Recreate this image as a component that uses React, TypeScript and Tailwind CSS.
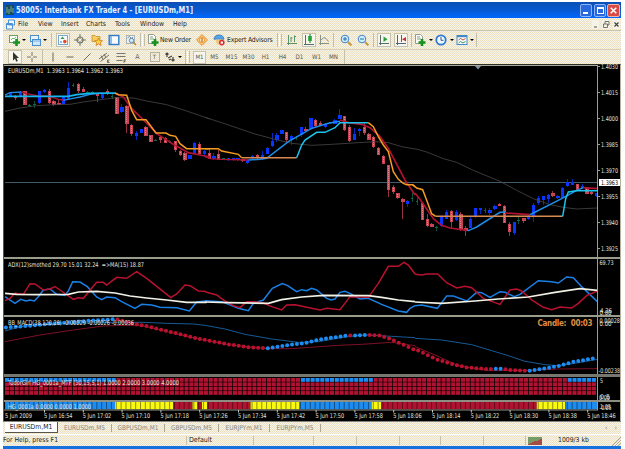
import React from 'react';

type Candle = [x: number, high: number, top: number, bottom: number, low: number, kind: string];

const colors: Record<string, string> = { b: '#0a35ff', r: '#c84455', t: '#0b6b4c' };
const BAR = 4.85;
const dither =
  'bg-[#ede5c8] bg-[conic-gradient(#f5f5ee_25%,#ebdfbd_0_50%,#f3f3ea_0_75%,#ece3c8_0)] bg-[length:2px_2px]';

// Candles are kept in thirds of a pixel, one block for each stretch of the session
const blocks: { origin: string; candles: Candle[]; lines: [string, string, number][] }[] = [
  {
    origin: 'translate(0 62) scale(.33333)',
    candles: [
      [31, 92, 94, 101, 103, 'b'], [46, 98, 101, 108, 114, 'r'], [61, 87, 94, 101, 103, 'b'], [75, 86, 88, 129, 129, 'r'],
      [90, 126, 130, 133, 136, 't'], [105, 118, 126, 129, 137, 't'], [119, 86, 87, 123, 125, 'b'], [134, 80, 83, 91, 93, 'b'],
      [148, 82, 88, 124, 126, 'r'], [162, 115, 117, 130, 132, 'r'], [177, 112, 122, 129, 130, 'r'], [191, 104, 106, 126, 127, 'b'],
      [206, 60, 77, 111, 113, 'b'], [220, 64, 69, 72, 76, 't'], [235, 63, 65, 88, 92, 'r'], [250, 74, 82, 89, 90, 'r'],
      [264, 86, 89, 92, 94, 't'], [278, 88, 91, 94, 96, 't'], [293, 93, 97, 103, 120, 'r'], [308, 93, 95, 108, 112, 'b'],
      [322, 80, 88, 96, 98, 'r'], [337, 96, 102, 105, 110, 't'], [351, 104, 106, 155, 155, 'r'], [366, 125, 134, 150, 154, 'b'],
      [381, 129, 131, 185, 212, 'r'], [395, 185, 189, 216, 222, 'r'], [410, 208, 214, 222, 233, 'b'], [424, 200, 202, 212, 214, 'b'],
      [438, 193, 195, 222, 222, 'r'], [453, 218, 220, 240, 240, 'r'], [468, 230, 233, 236, 238, 't'], [482, 222, 226, 233, 242, 'r'],
      [496, 225, 227, 243, 243, 'r'], [510, 234, 237, 240, 242, 't'], [526, 236, 238, 264, 270, 'r'], [541, 264, 266, 280, 282, 'r'],
      [555, 271, 273, 294, 296, 'r'], [570, 278, 280, 290, 291, 'b'], [584, 240, 242, 275, 275, 'b'], [599, 240, 246, 275, 280, 'r'],
      [614, 265, 267, 277, 285, 'b'], [628, 265, 272, 290, 291, 'r'],
    ],
    lines: [
      ['#454545', '15,148 60,138 110,131 165,128 210,127 250,120 310,112 350,107 400,108 440,117 500,128 560,147 630,171', 2.5],
      ['#1e8ee8', '15,99 30,92 65,90', 4],
      ['#b01232', '65,90 80,95 110,101 150,103 175,112 190,114', 4],
      ['#1e8ee8', '190,115 215,110 240,105 270,97 295,94 345,94', 4],
      ['#14b8f0', '15,103 205,103 230,98 270,94 345,93', 5],
      ['#b01232', '345,93 370,105 395,140 435,178 470,215 520,247 565,272 630,285', 5],
      ['#f59c22', '345,93 355,98 380,100 395,145 410,173 438,173 468,213 498,213 510,220 527,223 540,245 560,260 630,260', 4.5],
    ],
  },
  {
    origin: 'translate(205 90) scale(.33333)',
    candles: [
      [27, 190, 198, 208, 210, 'b'], [41, 180, 193, 210, 210, 'r'], [56, 203, 205, 208, 210, 't'], [70, 204, 205, 211, 212, 'b'],
      [85, 203, 205, 210, 212, 'b'], [99, 203, 205, 210, 212, 'b'], [114, 206, 208, 214, 215, 'r'], [128, 208, 209, 220, 221, 'b'],
      [143, 195, 197, 204, 206, 'b'], [158, 193, 195, 204, 206, 'r'], [173, 182, 194, 208, 209, 'b'], [187, 170, 174, 192, 193, 'b'],
      [202, 130, 153, 169, 170, 'b'], [216, 130, 136, 151, 155, 'b'], [231, 119, 120, 132, 132, 'b'], [245, 125, 127, 150, 160, 'r'],
      [260, 135, 138, 151, 165, 'b'], [274, 138, 142, 145, 150, 't'], [289, 110, 112, 136, 140, 'b'], [303, 110, 116, 122, 123, 'r'],
      [318, 83, 84, 118, 118, 'b'], [332, 87, 89, 108, 110, 'r'], [347, 94, 100, 107, 109, 'r'], [361, 99, 101, 111, 113, 'b'],
      [376, 95, 97, 100, 102, 't'], [390, 87, 89, 101, 102, 'b'], [405, 58, 75, 86, 88, 'b'], [419, 77, 79, 119, 122, 'r'],
      [434, 105, 111, 154, 155, 'r'], [448, 115, 131, 150, 150, 'b'], [463, 115, 117, 124, 138, 'b'], [478, 95, 110, 129, 134, 'r'],
      [492, 130, 132, 150, 150, 'r'], [506, 139, 141, 170, 174, 'r'], [521, 172, 174, 196, 196, 'r'], [536, 196, 197, 221, 221, 'r'],
      [550, 225, 226, 300, 320, 'r'], [565, 286, 291, 305, 312, 'r'], [579, 308, 309, 325, 327, 'r'], [594, 325, 328, 336, 386, 'r'],
      [608, 330, 334, 342, 350, 'b'], [622, 310, 324, 327, 335, 't'],
    ],
    lines: [
      ['#454545', '0,82 50,98 100,115 150,132 210,148 260,160 320,166 380,163 460,158 510,155 550,158 590,170 630,177', 2.5],
      ['#b01232', '0,200 15,206 50,208 130,210', 4],
      ['#1e8ee8', '130,210 165,208 185,205 250,155 320,115 370,100 405,94', 4.5],
      ['#b01232', '405,90 430,98 470,103 495,113 525,140 550,175 600,270 630,315', 5],
      ['#f59c22', '0,176 40,176 50,183 100,193 110,203', 4.5],
      ['#d98a50', '110,203 275,203', 4.5],
      ['#1cc4ee', '275,203 290,165 300,150 335,127 360,127 390,113 405,98 490,98', 4.5],
      ['#f59c22', '490,98 505,110 520,140 535,165 550,185 565,245 580,268 595,280 605,284 622,284 630,290', 4.5],
    ],
  },
  {
    origin: 'translate(400 62) scale(.33333)',
    candles: [
      [52, 405, 416, 419, 430, 't'], [67, 420, 422, 475, 475, 'r'], [82, 455, 470, 493, 494, 'r'], [96, 484, 486, 494, 496, 'r'],
      [111, 492, 496, 499, 508, 't'], [125, 463, 465, 492, 496, 'b'], [139, 445, 450, 470, 471, 'b'], [154, 444, 446, 480, 500, 'r'],
      [169, 445, 451, 475, 477, 'b'], [183, 450, 456, 503, 506, 'r'], [198, 493, 497, 507, 523, 'r'], [212, 464, 470, 497, 498, 'b'],
      [227, 438, 439, 466, 467, 'b'], [241, 437, 439, 445, 456, 'b'], [256, 438, 444, 447, 453, 't'], [270, 438, 445, 452, 458, 'b'],
      [285, 429, 431, 440, 445, 'b'], [299, 423, 425, 432, 433, 'r'], [314, 430, 433, 482, 483, 'r'], [328, 480, 486, 509, 523, 'r'],
      [343, 480, 481, 513, 518, 'b'], [357, 461, 474, 477, 487, 't'], [372, 468, 469, 476, 482, 'r'], [386, 455, 465, 471, 473, 'b'],
      [401, 424, 430, 466, 481, 'b'], [416, 402, 408, 424, 430, 'b'], [430, 401, 403, 415, 428, 'b'], [445, 397, 399, 410, 424, 'b'],
      [459, 387, 393, 402, 404, 'r'], [474, 398, 402, 408, 411, 'b'], [488, 376, 378, 408, 410, 'b'], [503, 352, 361, 373, 375, 'b'],
      [518, 352, 361, 368, 369, 'b'], [532, 366, 367, 385, 387, 'r'], [547, 365, 371, 378, 380, 'b'], [561, 376, 378, 395, 396, 'r'],
      [575, 387, 389, 397, 398, 'r'], [590, 392, 394, 403, 404, 'b'],
    ],
    lines: [
      ['#454545', '45,260 80,270 130,290 170,301 220,325 300,358 350,385 400,410 450,428 490,436 530,441 593,438', 2.5],
      ['#b01232', '45,393 60,412 100,470 125,490 150,498 200,505', 5],
      ['#1e8ee8', '203,506 212,503 230,495 300,451 315,450', 4.5],
      ['#b01232', '315,453 390,458', 5],
      ['#f59c22', '38,368 50,378 68,383 80,415 95,455 107,463', 4.5],
      ['#d98a50', '107,463 488,463', 4.5],
      ['#1e8ee8', '390,458 400,453 485,410 530,385 550,377', 4.5],
      ['#b01232', '550,377 593,380', 5],
      ['#1cc4ee', '488,463 497,410 505,390 530,386 593,386', 4.5],
    ],
  },
];

const adx: { origin: string; lines: [string, string][] }[] = [
  {
    origin: 'translate(0 255) scale(.33333)',
    lines: [
      ['#1a80e6', '15,125 45,145 62,133 78,138 90,135 103,138 115,125 130,105 150,102 170,118 195,121 205,108 218,80 240,81 262,95 290,126 305,134 320,126 345,128 365,140 405,160 425,148 455,150 480,157 530,158 568,168 590,141 616,138'],
      ['#b8122f', '15,137 30,130 45,115 70,118 90,86 105,87 130,105 150,102 165,95 180,105 220,133 235,128 250,130 290,82 310,82 320,90 350,67 380,70 410,50 440,70 490,110 512,128 530,117 555,90 570,92 595,108 616,109'],
      ['#f0f0e4', '15,115 50,118 110,119 205,118 235,111 290,109 345,114 390,123 440,129 500,135 560,142 620,142'],
    ],
  },
  {
    origin: 'translate(205 255) scale(.33333)',
    lines: [
      ['#1a80e6', '0,137 50,140 100,160 130,167 145,145 175,135 202,100 232,86 248,92 275,110 290,104 305,107 320,100 335,105 365,130 378,135 390,132 405,112 420,109 435,115 465,132 490,130 530,148 580,168 605,172 615,160 630,152'],
      ['#b8122f', '0,110 35,120 60,138 85,152 105,158 125,140 150,140 175,144 200,155 230,165 245,150 270,149 345,165 365,160 405,164 435,125 490,127 520,85 550,34 580,34 597,22 610,30 630,57'],
      ['#f0f0e4', '0,141 70,143 190,145 230,134 290,126 355,121 490,122 530,127 580,135 630,140'],
    ],
  },
  {
    origin: 'translate(415 255) scale(.33333)',
    lines: [
      ['#1a80e6', '0,152 20,150 67,160 95,123 115,123 155,138 185,112 200,113 225,127 255,110 270,112 298,125 315,118 370,77 410,80 430,84 455,66 475,68 500,95 547,140'],
      ['#b8122f', '0,58 20,60 35,57 68,57 95,83 125,99 150,94 170,98 205,130 255,148 285,105 305,102 320,108 350,135 385,157 410,164 435,156 470,159 490,145 515,122 547,108'],
      ['#f0f0e4', '0,141 80,145 180,138 250,132 340,126 420,112 495,101 547,106'],
    ],
  },
];

const bands: { origin: string; blue: string; red: string }[] = [
  {
    origin: 'translate(0 255) scale(.33333)',
    blue: '15,228 70,213 200,206 330,202 430,202 500,205 580,207 615,211',
    red: '15,260 120,240 220,225 310,213 375,211 430,213 500,230 615,256',
  },
  {
    origin: 'translate(205 255) scale(.33333)',
    blue: '0,211 60,222 120,238 200,252 280,262 340,260 420,246 480,240 560,244 630,248',
    red: '0,256 70,269 185,281 260,281 400,271 470,268 560,262 630,272',
  },
  {
    origin: 'translate(415 255) scale(.33333)',
    blue: '0,250 80,255 170,269 280,302 330,319 390,329 430,332 480,325 547,313',
    red: '0,275 60,300 130,332 220,347 340,346 430,342 547,341',
  },
];

const macd: [number, number][] = [
  [5, 327.5], [30, 325.7], [43, 324.3], [63, 322.7], [77, 321.7], [90, 320.7], [113, 319.3], [118, 319.7], [130, 323],
  [147, 326.3], [160, 329.7], [177, 333.3], [193, 337.7], [205, 340], [228, 344.3], [248, 347.3], [267, 348.2], [288, 345],
  [305, 343], [318, 339.7], [345, 335.7], [368, 335], [378, 335.3], [388, 338.3], [402, 344.3], [412, 349], [418, 350.7],
  [437, 359.7], [452, 364], [465, 367.3], [487, 369], [500, 368.7], [510, 370], [528, 371], [543, 368.7], [558, 366],
  [572, 362], [585, 359.7], [598, 357.7],
];

const macdBlue: [number, number][] = [[0, 115], [265, 346], [352, 366], [492, 502], [527, 600]];
const topBlue: [number, number][] = [[0, 115], [298, 370], [564, 600]];

const trend: [number, number, string][] = [
  [5, 115, '#1d8cf0'], [115, 173, '#fafa10'], [173, 192.5, '#b01232'], [192.5, 197.5, '#fafa10'], [197.5, 202, '#b01232'],
  [202, 207, '#fafa10'], [207, 250.5, '#b01232'], [250.5, 299, '#fafa10'], [299, 371.5, '#1d8cf0'], [371.5, 381, '#fafa10'],
  [381, 536.7, '#b01232'], [536.7, 565.3, '#fafa10'], [565.3, 597, '#1d8cf0'],
];

const prices = ['1.4030', '1.4015', '1.4000', '1.3985', '1.3970', '1.3955', '1.3940', '1.3925'];
const times = [
  '16:54', '17:02', '17:10', '17:18', '17:26', '17:34', '17:42', '17:50',
  '17:58', '18:06', '18:14', '18:22', '18:30', '18:38', '18:46',
];
const bars = Array.from({ length: 122 }, (_, i) => 5.4 + i * BAR);

function within(x: number, ranges: [number, number][]) {
  return ranges.some(([from, to]) => x >= from && x < to);
}

function macdAt(x: number) {
  const i = Math.max(1, macd.findIndex(p => p[0] >= x));
  const [x0, y0] = macd[i - 1];
  const [x1, y1] = macd[i];
  return y0 + ((y1 - y0) * (x - x0)) / (x1 - x0);
}

function Label({ x, y, w, size = 6.5, fill = '#e4e4dc', children }: {
  x: number; y: number; w: number; size?: number; fill?: string; children: string;
}) {
  return (
    <text x={x} y={y} fontSize={size} fill={fill} textLength={w} lengthAdjust="spacingAndGlyphs" xmlSpace="preserve">
      {children}
    </text>
  );
}

function Axis({ from, to }: { from: number; to: number }) {
  return <path d={`M597.5 ${from}V${to}`} stroke="#9a9f90" />;
}

function MainChart() {
  return (
    <svg className="block h-[192px] w-full overflow-visible" viewBox="4 65 616 192">
      <path d="M4 65.5H597.5" stroke="#a8ab98" />
      <path d="M5 182.5H597" stroke="#42596a" />
      {blocks.map(block => (
        <g key={block.origin} transform={block.origin}>
          <g shapeRendering="crispEdges">
            {block.candles.map(([x, high, top, bottom, low, kind]) => (
              <g key={x} fill={colors[kind]}>
                <rect x={x - 1.5} y={high} width={3} height={low - high} opacity={0.75} />
                <rect x={x - 4.5} y={top} width={kind === 't' ? 8 : 9.5} height={bottom - top} />
                {kind === 'r' && bottom - top > 12 && (
                  <path d={`M${x} ${top + 3}V${bottom - 3}`} stroke="#e0858c" strokeWidth={3} strokeDasharray="3 3" />
                )}
              </g>
            ))}
          </g>
          {block.lines.map(([color, points, width]) => (
            <polyline key={points} points={points} fill="none" stroke={color} strokeWidth={width} />
          ))}
        </g>
      ))}
      <path d="M475 66h6l-3 3.5z" fill="#7f92a8" />
      <Label x={8} y={73} w={115}>EURUSDm,M1  1.3963 1.3964 1.3962 1.3963</Label>
      <Axis from={65} to={257} />
      {prices.map((price, i) => (
        <g key={price}>
          <path d={`M598 ${66.5 + i * 26}h2`} stroke="#9a9f90" />
          <Label x={601} y={68.7 + i * 26} w={17}>{price}</Label>
        </g>
      ))}
      <rect x={599} y={179} width={21} height={7} fill="#fff" />
      <Label x={601} y={184.8} w={17} fill="#000">1.3963</Label>
    </svg>
  );
}

function AdxChart() {
  return (
    <svg className="block h-[56px] w-full overflow-visible" viewBox="4 259 616 56">
      {adx.map(part => (
        <g key={part.origin} transform={part.origin} fill="none">
          {part.lines.map(([color, points]) => (
            <polyline key={points} points={points} stroke={color} strokeWidth={color === '#f0f0e4' ? 5 : 4.5} />
          ))}
        </g>
      ))}
      <Label x={8} y={267} w={136}>ADX(12)smothed 29.70 15.01 32.24  =&gt;MA(15) 18.87</Label>
      <Axis from={259} to={315} />
      <Label x={599.5} y={265.3} w={14}>69.73</Label>
      <Label x={600} y={313} w={12}>4.26</Label>
      <Label x={599.5} y={314.5} w={12}>0.00</Label>
    </svg>
  );
}

function MacdChart() {
  return (
    <svg className="block h-[57px] w-full overflow-visible" viewBox="4 317 616 57">
      {bands.map(part => (
        <g key={part.origin} transform={part.origin} fill="none" strokeWidth={3}>
          <polyline points={part.blue} stroke="#175a96" />
          <polyline points={part.red} stroke="#7d1127" />
        </g>
      ))}
      {bars.map(x => (
        <circle key={x} cx={x + 0.5} cy={macdAt(x)} r={2} fill={within(x, macdBlue) ? '#1d8cf0' : '#b8122f'} />
      ))}
      <Label x={8} y={325} w={126}>BB_MACD(38,120,26) -0.00029 -0.00026 -0.00036</Label>
      <text x={537.5} y={325.5} fontSize={8} fontWeight="bold" fill="#dd8f45" textLength={55} xmlSpace="preserve">
        Candle:  00:03
      </text>
      <Axis from={317} to={374} />
      <Label x={599.5} y={323} w={20.5}>0.00028</Label>
      <Label x={599.5} y={325.5} w={12}>0.00</Label>
      <Label x={598.5} y={373} w={21.5}>-0.00238</Label>
    </svg>
  );
}

function TrendGrid() {
  return (
    <svg className="block h-[23px] w-full overflow-visible" viewBox="4 377 616 23">
      {bars.map(x =>
        [0, 1, 2, 3].map(row => (
          <rect
            key={`${x}-${row}`}
            x={x - 0.4}
            y={378 + row * 4.35}
            width={4.1}
            height={3.8}
            fill={row === 0 && within(x, topBlue) ? '#1d8cf0' : '#b01232'}
          />
        ))
      )}
      <Label x={8} y={384.5} w={171}>TudorGirl HG_0001a_MTF (30,15,5,1) 1.0000 2.0000 3.0000 4.0000</Label>
      <Axis from={377} to={400} />
      <Label x={600} y={382.5} w={3}>5</Label>
      <Label x={600} y={398.5} w={10}>0.5</Label>
      <Label x={599} y={399.5} w={11}>0.00</Label>
    </svg>
  );
}

function TrendStrip() {
  return (
    <svg className="block h-[19px] w-full overflow-visible" viewBox="4 402 616 19">
      {trend.map(([from, to, fill]) => (
        <rect key={from} x={from} y={402} width={to - from} height={7.3} fill={fill} />
      ))}
      {bars.map(x => (
        <path key={x} d={`M${x - 0.7} 402v7.3`} stroke="#000" strokeOpacity={0.55} strokeWidth={0.8} />
      ))}
      <path d="M4 410H598" stroke="#8f9386" />
      <Label x={8} y={409.3} w={83}>HG_0001a 0.0000 0.0000 1.0000</Label>
      <Axis from={402} to={410} />
      <Label x={600} y={408.5} w={11}>1.05</Label>
      <Label x={599.5} y={409.5} w={12}>-0.05</Label>
      <Label x={5} y={418} w={27}>5 Jun 2009</Label>
      {times.map((time, i) => (
        <g key={time}>
          <path d={`M${44.5 + i * 38.8} 410v2.5`} stroke="#c8c8c0" />
          <Label x={44 + i * 38.8} y={418} w={28.5}>{`5 Jun ${time}`}</Label>
        </g>
      ))}
    </svg>
  );
}

const icons: Record<string, React.ReactNode> = {
  newChart: (
    <>
      <rect x="1.5" y="1.5" width="8" height="7" fill="#fafdf5" stroke="#68a068" />
      <path d="M3 6l2-2 1 1 2-2" stroke="#79b979" fill="none" />
      <path d="M8.5 5v7M5 8.5h7" stroke="#169522" strokeWidth="2.6" />
    </>
  ),
  profiles: (
    <>
      <rect x="1.5" y="1.5" width="8" height="6" fill="#e8f4fd" stroke="#4a8ed2" />
      <rect x="3.5" y="5.5" width="8" height="6" fill="#cfe6fb" stroke="#4a8ed2" />
      <path d="M4 7h7" stroke="#72b1ea" />
    </>
  ),
  market: (
    <>
      <rect x="1.5" y="1.5" width="9" height="9" fill="#f8fbff" stroke="#7aa5cf" />
      <path d="M3.5 5l2-2.5 2 2.5z" fill="#2f9a40" />
      <circle cx="7.8" cy="7.6" r="1.8" fill="#e04b2a" />
      <path d="M3 8h2" stroke="#3a70c0" />
    </>
  ),
  cross: (
    <>
      <circle cx="6" cy="6" r="3" fill="none" stroke="#77766c" strokeWidth="1.2" />
      <path d="M6 0v5M6 7v5M0 6h5M7 6h5" stroke="#77766c" />
    </>
  ),
  navigator: (
    <>
      <path d="M1 1.5h3l1 1h4v5H1z" fill="#f6cc5a" stroke="#c39335" strokeWidth=".8" />
      <path d="M7.5 4l1.2 2.6 2.9.2-2.2 1.8.7 2.9-2.6-1.6-2.5 1.6.7-2.9-2.2-1.8 2.9-.2z" fill="#fcd73a" stroke="#d17a2b" strokeWidth=".8" />
    </>
  ),
  terminal: (
    <>
      <rect x="1.2" y="1.5" width="9.6" height="9" fill="#f8fcff" stroke="#3279c6" strokeWidth="1.4" />
      <path d="M3 2v8" stroke="#6ea8e3" strokeWidth="1.5" />
    </>
  ),
  tester: (
    <>
      <rect x="1.5" y="1.5" width="8" height="8" fill="#eef1ee" stroke="#9aa6ad" strokeWidth=".8" />
      <path d="M2.5 4l2-1.5 2 2L8 3" fill="none" stroke="#6b8ba8" />
      <circle cx="6.5" cy="6.5" r="2.2" fill="#d4ebfb" stroke="#5988b4" />
      <path d="M8 8l3 3" stroke="#c38a35" strokeWidth="1.6" />
    </>
  ),
  order: (
    <>
      <path d="M1.5.5h5l2 2v7h-7z" fill="#fbfcf7" stroke="#7b8778" strokeWidth=".8" />
      <path d="M3 3h3M3 5h4" stroke="#88a088" />
      <path d="M8 5v7M4.5 8.5h7" stroke="#15911e" strokeWidth="2.6" />
    </>
  ),
  editor: (
    <>
      <path d="M6 .6L11.4 6 6 11.4.6 6z" fill="#fbd07a" stroke="#e8892c" />
      <circle cx="6" cy="6" r="2.6" fill="#fdeab8" stroke="#e8892c" strokeWidth=".8" />
      <path d="M6 4v4" stroke="#9c5d12" />
    </>
  ),
  expert: (
    <>
      <path d="M1 5.2Q1.5 1 6 1t5 4.2z" fill="#56a5e8" stroke="#2f72b8" strokeWidth=".8" />
      <path d="M2.500 5.500h7L8 10.500H4z" fill="#f3c878" />
      <circle cx="8.8" cy="8.6" r="2.8" fill="#d62931" />
      <rect x="7.7" y="7.5" width="2.2" height="2.2" fill="#fff" />
    </>
  ),
  barChart: <path d="M2.5 1v10M1 9.5h10M5 3v5M5 4h1.5M8.5 1.5v6.5M8.5 2.5H10" stroke="#4a8a60" strokeWidth=".9" fill="none" />,
  candleChart: (
    <>
      <path d="M2.5 1v10M1 10.5h10" stroke="#55706a" />
      <path d="M7 0v9" stroke="#0e7c20" />
      <rect x="5.2" y="2" width="3.6" height="5" fill="#1ea336" />
    </>
  ),
  lineChart: <path d="M2.5 1v10M1 9.5h10M3 6l3-2.500 2 1 2.500 3" stroke="#7b8a80" strokeWidth=".9" fill="none" />,
  zoomIn: (
    <>
      <path d="M8 8l3.4 3.4" stroke="#c9983a" strokeWidth="2" />
      <circle cx="5" cy="5" r="3.8" fill="#d2ecfc" stroke="#3f86c7" />
      <path d="M3 5h4M5 3v4" stroke="#236dae" />
    </>
  ),
  zoomOut: (
    <>
      <path d="M8 8l3.4 3.4" stroke="#c9983a" strokeWidth="2" />
      <circle cx="5" cy="5" r="3.8" fill="#d2ecfc" stroke="#3f86c7" />
      <path d="M3 5h4" stroke="#236dae" />
    </>
  ),
  scroll: (
    <>
      <path d="M2.5 1v10M1 9.5h10" stroke="#55706a" />
      <path d="M5.5 2.5L9.5 5.3l-4 2.8z" fill="#26a03b" />
    </>
  ),
  shift: (
    <>
      <path d="M2.5 1v10M1 9.5h10M6.5 1v7" stroke="#4f6480" />
      <path d="M11 3v4.5L7 5.3z" fill="#c2313b" />
    </>
  ),
  clock: (
    <>
      <circle cx="6" cy="6" r="4.7" fill="#eff8ff" stroke="#2f78cd" strokeWidth="1.8" />
      <path d="M6 3v3.3h2.5" stroke="#35557d" fill="none" />
    </>
  ),
  template: (
    <>
      <rect x="1" y="1.5" width="10" height="9" fill="#f7fbfa" stroke="#4489c6" />
      <path d="M1 2.5h10" stroke="#4489c6" strokeWidth="1.4" />
      <path d="M2.5 6l2-1.5L7 6l2.5-1.5" stroke="#c75445" fill="none" />
      <path d="M2.5 9l2-1.5L7 9l2.5-1.5" stroke="#3f9a58" fill="none" />
    </>
  ),
  pointer: <path d="M4 1v8.5l2-1.8 1.3 3 1.5-.7-1.3-2.9H10z" fill="#34342f" />,
  crosshair: <path d="M6 1v4M6 7v4M1 6h4M7 6h4" stroke="#77776d" />,
  vertical: <path d="M6 1.5v9" stroke="#66665e" />,
  horizontal: <path d="M2.5 6h7" stroke="#66665e" />,
  trendline: <path d="M2.5 9.5l7-7" stroke="#66665e" />,
  channel: (
    <>
      <path d="M1 8l8-6M2.5 10.5L11 4M3 4.5l2 4M6 3l2 4" stroke="#66665e" strokeWidth=".9" />
      <path d="M11.5 9h-2v2.5h2M9.5 10.2h1.5" stroke="#44443c" strokeWidth=".7" fill="none" />
    </>
  ),
  fibo: (
    <>
      <path d="M1.5 2.5h9M1.5 5.5h9M1.5 9.5h6" stroke="#77776d" />
      <path d="M9 11.8V8.8h2M9 10.2h1.6" stroke="#44443c" strokeWidth=".7" fill="none" />
    </>
  ),
  label: <rect x="1.5" y="1.5" width="9" height="9" fill="none" stroke="#77776d" strokeDasharray="1 1" />,
  arrows: <path d="M3 6V2M1.5 3.5L3 2l1.5 1.5M4 7l4-2M9 6v4M7.5 8.5L9 10l1.5-1.5M5 9l2-1" stroke="#44443c" strokeWidth="1.2" fill="none" />,
};

function Icon({ name, className = 'w-[17px]' }: { name: string; className?: string }) {
  return (
    <span className={`flex shrink-0 items-center justify-center ${className}`}>
      <svg className="h-[12px] w-[12px]" viewBox="0 0 12 12">{icons[name]}</svg>
    </span>
  );
}

function Pressed({ name }: { name: string }) {
  return (
    <span className="flex w-[17px] shrink-0 justify-center">
      <span className="flex h-[14px] w-[14px] items-center justify-center border border-[#c5c2ae] bg-[#f8f6ec]">
        <svg className="h-[12px] w-[12px]" viewBox="0 0 12 12">{icons[name]}</svg>
      </span>
    </span>
  );
}

function Drop({ className = 'w-[7px]' }: { className?: string }) {
  return (
    <span className={`flex shrink-0 justify-center ${className}`}>
      <span className="h-0 w-0 border-x-2 border-t-2 border-x-transparent border-t-black" />
    </span>
  );
}

function Separator({ className = 'w-[4px]' }: { className?: string }) {
  return (
    <span className={`flex shrink-0 justify-center ${className}`}>
      <span className="h-[14px] w-px bg-[#c3bfaa]" />
    </span>
  );
}

function Handle() {
  return <span className="h-[12px] w-[3px] shrink-0 border-x border-l-white border-r-[#c3bea6]" />;
}

const menus: [string, string][] = [
  ['File', 'w-[20px]'], ['View', 'w-[23px]'], ['Insert', 'w-[25px]'], ['Charts', 'w-[29px]'],
  ['Tools', 'w-[25px]'], ['Window', 'w-[33px]'], ['Help', 'w-[20px]'],
];
const periods = ['M5', 'M15', 'M30', 'H1', 'H4', 'D1', 'W1', 'MN'];
const tabs: [string, string][] = [
  ['EURUSDm,M5', 'w-[54px]'], ['GBPUSDm,M1', 'w-[53px]'], ['GBPUSDm,M5', 'w-[54px]'],
  ['EURJPYm,M1', 'w-[51px]'], ['EURJPYm,M5', 'w-[51px]'],
];

export default function App() {
  return (
    <div className="flex h-[449px] w-[625px] flex-col overflow-hidden bg-white pl-[3px] pr-[4px] pt-[2px] font-['DejaVu_Sans_Condensed','DejaVu_Sans','Liberation_Sans',sans-serif] text-[7px] leading-none whitespace-nowrap text-[#242420]">
      {/* Title bar */}
      <div className="flex h-[16px] shrink-0 items-center bg-linear-to-b from-[#0a50b5] via-[#0758d0] to-[#0068ff] pl-[3px] pr-px">
        <svg className="h-[10px] w-[8px]" viewBox="0 0 8 10">
          <rect width="8" height="10" fill="#174b55" />
          <path d="M1 8V2M3 9V4M5 7V1M7 8V3" stroke="#7fae9c" />
        </svg>
        <svg className="ml-[2px] h-[14px] w-[180px] overflow-visible" viewBox="0 0 180 14">
          <text x="0" y="10.3" fontSize="9" fontWeight="bold" fill="#e6f0ff" textLength="177" lengthAdjust="spacingAndGlyphs">
            58005: Interbank FX Trader 4 - [EURUSDm,M1]
          </text>
        </svg>
        <div className="ml-auto flex gap-px">
          <span className="flex h-[13px] w-[12px] items-end rounded-xs border border-[#8db4f5] bg-[#2867dc] p-[2px]">
            <span className="h-[2px] w-[5px] bg-white" />
          </span>
          <span className="ml-px flex h-[13px] w-[12px] items-center justify-center rounded-xs border border-[#8db4f5] bg-[#2867dc]">
            <span className="h-[7px] w-[7px] border border-t-2 border-white" />
          </span>
          <span className="flex h-[13px] w-[13px] items-center justify-center rounded-xs border border-[#f0b5a5] bg-[#d84a42]">
            <svg className="h-[7px] w-[7px]" viewBox="0 0 7 7"><path d="M.7.7l5.6 5.6M6.3.7L.7 6.3" stroke="#fff" strokeWidth="1.5" /></svg>
          </span>
        </div>
      </div>

      {/* Menu */}
      <div className={`flex h-[13px] shrink-0 items-center border-b border-[#c9c4ac] pl-[3px] ${dither}`}>
        <svg className="mr-[3px] h-[11px] w-[9px] shrink-0" viewBox="0 0 9 11">
          <path d="M2.5 1h6v5h-6zM.5 4.5h6V10h-6z" fill="#f2f9ff" stroke="#4c91d5" />
          <path d="M1 5.5h5" stroke="#4c91d5" />
        </svg>
        {menus.map(([name, width]) => (
          <span key={name} className={`${width} text-[6.8px]`}>{name}</span>
        ))}
        <div className="ml-auto flex items-center gap-[3px] pr-px">
          <svg className="h-[9px] w-[7px] bg-[#f5f3e8]" viewBox="0 0 7 9"><path d="M2 7h3" stroke="#55554d" /></svg>
          <svg className="h-[9px] w-[8px] bg-[#f5f3e8]" viewBox="0 0 8 9"><path d="M3 4V1.5h4V5H5.5M1.5 4h4v3.5h-4z" fill="none" stroke="#66665e" strokeWidth=".9" /></svg>
          <svg className="h-[9px] w-[7px] bg-[#f5f3e8]" viewBox="0 0 7 9"><path d="M1.5 2.5l4 4M5.5 2.5l-4 4" stroke="#44443c" strokeWidth="1.2" /></svg>
        </div>
      </div>

      {/* Toolbars */}
      <div className={`flex h-[18px] shrink-0 items-center pl-[5px] ${dither}`}>
        <Icon name="newChart" className="w-[12px]" />
        <Drop />
        <Icon name="profiles" className="ml-[2px] w-[12px]" />
        <Drop />
        <Separator className="w-[6px]" />
        <Pressed name="market" />
        <Icon name="cross" />
        <Icon name="navigator" />
        <Icon name="terminal" />
        <Icon name="tester" />
        <Separator className="w-[3px]" />
        <Handle />
        <Icon name="order" className="w-[15px]" />
        <span className="w-[32px] text-[6.8px] tracking-[-0.2px]">New Order</span>
        <Icon name="editor" className="w-[19px]" />
        <Icon name="expert" className="w-[16px]" />
        <span className="w-[48px] text-[6.8px] tracking-[-0.15px]">Expert Advisors</span>
        <Separator />
        <Handle />
        <Icon name="barChart" className="ml-px w-[17px]" />
        <Pressed name="candleChart" />
        <Icon name="lineChart" className="w-[14px]" />
        <Separator />
        <Icon name="zoomIn" className="ml-[2px] w-[17px]" />
        <Icon name="zoomOut" />
        <Separator />
        <Pressed name="scroll" />
        <Pressed name="shift" />
        <Separator />
        <Icon name="order" className="w-[14px]" />
        <Drop />
        <Icon name="clock" className="w-[14px]" />
        <Drop />
        <Icon name="template" className="w-[14px]" />
        <Drop className="w-[5px]" />
        <Separator />
      </div>
      <div className={`flex h-[15px] shrink-0 items-center border-t border-[#d5d0b8] pl-[3px] ${dither}`}>
        <Pressed name="pointer" />
        <Icon name="crosshair" className="w-[18px]" />
        <Separator className="w-[3px]" />
        <Icon name="vertical" />
        <Icon name="horizontal" />
        <Icon name="trendline" />
        <Icon name="channel" />
        <Icon name="fibo" />
        <span className="w-[17px] text-center text-[#66665e]">A</span>
        <span className="relative flex w-[17px] items-center justify-center">
          <Icon name="label" />
          <span className="absolute text-[6px] text-[#55554d]">T</span>
        </span>
        <Icon name="arrows" className="w-[14px]" />
        <Drop className="w-[6px]" />
        <Separator />
        <Handle />
        <span className="ml-[3px] flex h-[13px] w-[13px] items-center justify-center border border-[#c5c2ae] bg-[#f8f6ec] text-[6px] text-[#55554d]">M1</span>
        {periods.map(period => (
          <span key={period} className="w-[17px] text-center text-[6.2px] text-[#55554d]">{period}</span>
        ))}
        <Separator />
      </div>

      {/* Chart window */}
      <div className="flex h-[357px] shrink-0 flex-col border-r border-t border-l border-r-[#b5b29e] border-t-[#2c2c28] border-l-[#55564e] bg-black">
        <MainChart />
        <div className="h-[2px] shrink-0 bg-[#999d8c]" />
        <AdxChart />
        <div className="h-[2px] shrink-0 bg-[#999d8c]" />
        <MacdChart />
        <div className="h-[3px] shrink-0 bg-[#77776f]" />
        <TrendGrid />
        <div className="h-[2px] shrink-0 bg-[#8b8e80]" />
        <TrendStrip />
      </div>

      {/* Chart tabs */}
      <div className={`flex h-[13px] shrink-0 border-t border-[#85857a] text-[#89877b] ${dither}`}>
        <span className="ml-[2px] flex h-[11px] w-[53px] items-center justify-center border-r border-b border-[#55554d] bg-white text-[6.8px] text-[#242420]">EURUSDm,M1</span>
        {tabs.map(([name, width]) => (
          <span key={name} className={`${width} my-[2px] flex h-[8px] items-center justify-center border-r border-[#aaa793] text-[6.5px]`}>{name}</span>
        ))}
        <span className="ml-auto flex items-center gap-[7px] pr-[4px]"><span>‹</span><span>›</span></span>
      </div>

      {/* Status bar */}
      <div className={`flex h-[12px] shrink-0 items-center border-t border-white ${dither}`}>
        <span className="w-[183px] text-[6.8px]">For Help, press F1</span>
        <span className="flex h-[9px] w-[67px] items-center border-l border-[#c6c1aa] pl-[2px]">Default</span>
        <span className="h-[9px] w-[61px] border-x border-[#c6c1aa]" />
        <span className="h-[9px] w-[43px] border-r border-[#c6c1aa]" />
        <span className="h-[9px] w-[43px] border-r border-[#c6c1aa]" />
        <span className="h-[9px] w-[41px] border-r border-[#c6c1aa]" />
        <span className="h-[9px] w-[43px] border-r border-[#c6c1aa]" />
        <span className="h-[9px] w-[42px] border-r border-[#c6c1aa]" />
        <svg className="ml-[2px] h-[8px] w-[15px]" viewBox="0 0 15 8">
          <path d="M1 0v8M3 0v8M5 0v8M7 0v8M9 0v8M11 0v8M13 0v8" stroke="#427a38" strokeWidth="1.4" />
          <path d="M1 7v1M3 6v2M5 5v3M7 4v4M9 4v4M11 3v5M13 2v6" stroke="#b52b35" strokeWidth="1.4" />
        </svg>
        <span className="ml-[15px] text-[6.8px]">1009/3 kb</span>
        <svg className="ml-auto h-[10px] w-[10px]" viewBox="0 0 10 10">
          <path d="M1 10l9-9M4 10l6-6M7 10l3-3" stroke="#aaa793" />
        </svg>
      </div>
      <div className="h-[3px] shrink-0 bg-[#1671dc]" />
    </div>
  );
}
